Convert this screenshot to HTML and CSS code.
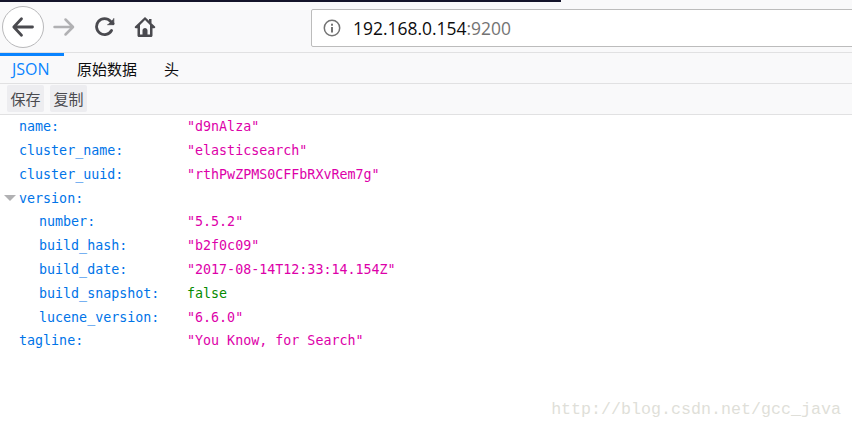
FILE: index.html
```html
<!DOCTYPE html>
<html lang="zh">
<head>
<meta charset="utf-8">
<title>192.168.0.154:9200</title>
<link rel="stylesheet" href="styles.css">
</head>
<body>
<div class="titlestrip"><div class="titledark"></div><div class="titleblue"></div></div>
<header class="navbar">
  <button class="navbtn back" aria-label="back">
    <svg width="24" height="24" viewBox="0 0 24 24" fill="none" stroke="#4a4a4f" stroke-width="2.800" stroke-linecap="round" stroke-linejoin="round"><path d="M21.500 12H3M10.500 3.800 2.800 12l7.700 8.200"/></svg>
  </button>
  <span class="navicon fwd">
    <svg width="22" height="22" viewBox="0 0 22 22" fill="none" stroke="#b1b1b3" stroke-width="2.500" stroke-linecap="round" stroke-linejoin="round"><path d="M1.500 11h18M12.500 3.500 20 11l-7.500 7.500"/></svg>
  </span>
  <span class="navicon reload">
    <svg width="20" height="20" viewBox="0 0 20 20" fill="none" stroke="#4a4a4f" stroke-width="2.800" stroke-linecap="round" stroke-linejoin="round"><path d="M16.500 13.500A8 8 0 1 1 15.500 4.200L18 6.500"/><path d="M18.800 1.500v6.200h-6.200" fill="#4a4a4f" stroke-width="0.800"/></svg>
  </span>
  <span class="navicon home">
    <svg width="22" height="22" viewBox="0 0 22 22"><path fill="#4a4a4f" fill-rule="evenodd" d="M11 1 1 10.500c-.6.700-.2 1.700.8 1.700H3.500v7.300c0 .8.600 1.500 1.500 1.500h12c.9 0 1.500-.7 1.500-1.500v-7.300h1.700c1 0 1.400-1 .8-1.700L17.500 7.200V3h-2.500v1.800L11 1Zm0 3 5 5v9.500h-2.500v-4c0-1.400-1.100-2.500-2.500-2.500s-2.500 1.100-2.500 2.500v4H6V9l5-5Z"/></svg>
  </span>
  <div class="urlbar">
    <svg class="info" width="18" height="18" viewBox="0 0 18 18"><circle cx="9" cy="9" r="7.700" fill="none" stroke="#737373" stroke-width="1.500"/><rect x="8" y="8" width="2" height="5.500" fill="#737373"/><rect x="8" y="4.700" width="2" height="2" fill="#737373"/></svg>
    <span class="host">192.168.0.154</span><span class="port">:9200</span>
  </div>
</header>
<nav class="tabs">
  <div class="tab active">JSON</div>
  <div class="tab wide">原始数据</div>
  <div class="tab">头</div>
</nav>
<div class="actions">
  <button class="action">保存</button>
  <button class="action">复制</button>
</div>
<main class="tree">
  <div class="row"><span class="key">name:</span><span class="str">"d9nAlza"</span></div>
  <div class="row"><span class="key">cluster_name:</span><span class="str">"elasticsearch"</span></div>
  <div class="row"><span class="key">cluster_uuid:</span><span class="str">"rthPwZPMS0CFFbRXvRem7g"</span></div>
  <div class="row"><span class="key"><i class="twisty"></i>version:</span></div>
  <div class="row nested"><span class="key">number:</span><span class="str">"5.5.2"</span></div>
  <div class="row nested"><span class="key">build_hash:</span><span class="str">"b2f0c09"</span></div>
  <div class="row nested"><span class="key">build_date:</span><span class="str">"2017-08-14T12:33:14.154Z"</span></div>
  <div class="row nested"><span class="key">build_snapshot:</span><span class="bool">false</span></div>
  <div class="row nested"><span class="key">lucene_version:</span><span class="str">"6.6.0"</span></div>
  <div class="row"><span class="key">tagline:</span><span class="str">"You Know, for Search"</span></div>
</main>
<div class="watermark">http://blog.csdn.net/gcc_java</div>
</body>
</html>
```
FILE: styles.css
```css
* { box-sizing: border-box; }
html, body { margin: 0; height: 100%; overflow: hidden; background: #fff; }
body { font-family: "Noto Sans CJK SC", "Liberation Sans", sans-serif; position: relative; }
.titlestrip { display: flex; height: 2px; background: #f9f9fa; }
.titledark { width: 561px; background: #14142a; }
.titleblue { margin-left: auto; width: 11px; }
.navbar { height: 51px; background: #f9f9fa; border-bottom: 1px solid #e1e1e2; display: flex; align-items: center; padding-left: 2px; position: relative; }
.navbtn { width: 42px; height: 42px; border-radius: 50%; border: 1px solid #b9b9bb; background: #fff; padding: 0; display: flex; align-items: center; justify-content: center; margin-top: -1px; }
.navicon { display: flex; align-items: center; justify-content: center; }
.fwd { margin-left: 9px; margin-top: -1px; }
.reload { margin-left: 20px; margin-top: -1px; }
.home { margin-left: 19px; }
.urlbar { position: absolute; left: 311px; right: -4px; top: 7px; height: 38px; background: #fff; border: 1px solid #bcbcbc; border-radius: 2px; display: flex; align-items: center; padding-left: 11px; font: 17.450px "Open Sans", "Liberation Sans", sans-serif; }
.info { margin-right: 12px; }
.host { color: #0c0c0d; }
.port { color: #737373; }
.tabs { height: 31px; background: #f9f9fa; border-bottom: 1px solid #e1e1e2; display: flex; font-size: 15px; color: #0c0c0d; }
.tab { padding: 5px 13px 0; position: relative; width: 42px; white-space: nowrap; }
.tab.active { width: 64px; padding-left: 12px; color: #0a84ff; font-family: "Open Sans", sans-serif; border-top: 3px solid #0a84ff; padding-top: 2px; font-size: 16px; }
.tab.wide { width: 87px; }
.actions { height: 31px; background: #f9f9fa; border-bottom: 1px solid #e1e1e2; display: flex; gap: 6px; padding: 1px 0 0 7px; }
.action { width: 37px; height: 27px; padding: 0; border: 0; border-radius: 2px; background: #ededf0; color: #4a4a4f; font: 15px "Noto Sans CJK SC", sans-serif; }
.tree { padding-top: 0.300px; font: 13.330px/23.800px "DejaVu Sans Mono", monospace; }
.row { display: flex; height: 23.800px; padding-left: 19px; }
.key { width: 168px; color: #0074e8; position: relative; white-space: pre; flex: none; }
.nested { padding-left: 39px; }
.nested .key { width: 148px; }
.str { color: #dd00a9; white-space: pre; }
.bool { color: #058b00; }
.twisty { position: absolute; left: -15px; top: 8px; width: 0; height: 0; border-left: 6px solid transparent; border-right: 6px solid transparent; border-top: 6px solid #b1b1b3; }
.watermark { position: absolute; right: 11px; top: 400px; font: 16.670px "Liberation Mono", monospace; color: #dfdfd9; white-space: nowrap; }
```
